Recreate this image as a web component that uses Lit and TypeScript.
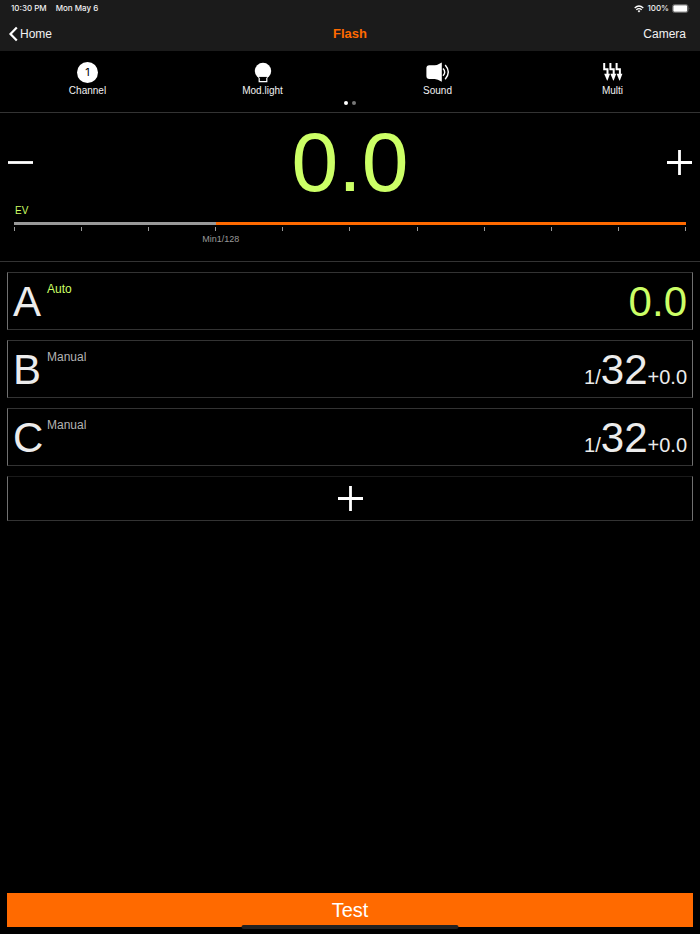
import { LitElement, html, svg, css, nothing } from "lit";
import { customElement, property, state } from "lit/decorators.js";
import { classMap } from "lit/directives/class-map.js";

interface Group {
  name: string;
  mode: "Auto" | "Manual";
  prefix?: string;
  value: string;
  suffix?: string;
}

const GROUPS: Group[] = [
  { name: "A", mode: "Auto", value: "0.0" },
  { name: "B", mode: "Manual", prefix: "1/", value: "32", suffix: "+0.0" },
  { name: "C", mode: "Manual", prefix: "1/", value: "32", suffix: "+0.0" },
];

const plusIcon = html`<svg class="sign" viewBox="0 0 25 25" width="25" height="25" aria-hidden="true">
  <path d="M0 12.5H25M12.5 0V25" stroke="#fff" stroke-width="2.8" fill="none" />
</svg>`;

const minusIcon = html`<svg class="sign" viewBox="0 0 25 25" width="25" height="25" aria-hidden="true">
  <path d="M0 12.5H25" stroke="#fff" stroke-width="2.8" fill="none" />
</svg>`;

const bolt = (x: number) => svg`<g transform="translate(${x} 0)">
  <path d="M2.2 2V8.2H5.5V14" fill="none" stroke="#fff" stroke-width="2" />
  <path d="M2.2 12.8H8L5.5 19.4H5Z" fill="#fff" />
</g>`;

const bulbIcon = html`<svg viewBox="0 0 22 22" width="22" height="22" aria-hidden="true">
  <circle cx="11" cy="10" r="8.2" fill="#fff" />
  <path d="M7.2 16V20.7H14.8V16" fill="#000" stroke="#fff" stroke-width="1.2" />
  <path d="M7 16.4H15" stroke="#000" stroke-width=".8" />
</svg>`;

const soundIcon = html`<svg viewBox="0 0 24 22" width="24" height="22" aria-hidden="true">
  <path d="M3.3 4.2H8.8Q11.5 4 15.8 1.4V20.8Q11.5 18.2 8.8 18H3.3Q.4 18 .4 15.1V7.1Q.4 4.2 3.3 4.2Z" fill="#fff" />
  <path d="M17 7.6Q20.4 11.1 17 14.8M19.2 4Q25.4 11 19.2 18.2" fill="none" stroke="#fff" stroke-width="1.4" />
</svg>`;

const multiIcon = html`<svg viewBox="0 0 22 22" width="22" height="22" aria-hidden="true">
  ${bolt(0)}${bolt(6.2)}${bolt(12.4)}
</svg>`;

@customElement("tool-button")
export class ToolButton extends LitElement {
  @property() label = "";

  static styles = css`
    :host {
      display: block;
    }
    .tool {
      display: flex;
      flex-direction: column;
      align-items: center;
      width: 100%;
      padding: 0;
      border: 0;
      background: none;
      color: #f2f2f2;
      font: 10px/16px "Liberation Sans", Arial, sans-serif;
      cursor: pointer;
    }
    .icon {
      display: flex;
      align-items: center;
      justify-content: center;
      height: 22px;
    }
  `;

  render() {
    return html`<button class="tool">
      <span class="icon"><slot></slot></span>
      <span>${this.label}</span>
    </button>`;
  }
}

@customElement("flash-group")
export class FlashGroup extends LitElement {
  @property({ attribute: false }) group!: Group;

  static styles = css`
    :host {
      display: block;
    }
    .row {
      box-sizing: border-box;
      display: flex;
      align-items: flex-start;
      width: 100%;
      height: 58px;
      padding: 5px;
      border: 1px solid #333;
      border-left-color: #707070;
      border-right-color: #707070;
      background: #000;
      color: #ececec;
      font-family: "Liberation Sans", Arial, sans-serif;
      text-align: left;
      cursor: pointer;
    }
    .name {
      width: 34px;
      font-size: 42px;
      line-height: 48px;
    }
    .mode {
      flex: 1;
      color: #b4b4b4;
      font-size: 12px;
      line-height: 22px;
    }
    .reading {
      font-size: 20px;
      line-height: 48px;
    }
    .value {
      font-size: 42px;
    }
    .auto .mode,
    .auto .value {
      color: #ccff66;
    }
  `;

  render() {
    const { name, mode, prefix, value, suffix } = this.group;
    return html`<button class=${classMap({ row: true, auto: mode === "Auto" })}>
      <span class="name">${name}</span>
      <span class="mode">${mode}</span>
      <span class="reading">${prefix ?? nothing}<span class="value">${value}</span>${suffix ?? nothing}</span>
    </button>`;
  }
}

@customElement("app-root")
export class AppRoot extends LitElement {
  @state() private groups = GROUPS;

  static styles = css`
    :host {
      display: flex;
      flex-direction: column;
      min-height: 100vh;
      background: #000;
      color: #fff;
      font-family: "Liberation Sans", Arial, sans-serif;
    }
    button {
      padding: 0;
      border: 0;
      background: none;
      color: inherit;
      font-family: inherit;
      cursor: pointer;
    }
    svg {
      display: block;
    }
    .top {
      background: #1b1b1b;
    }
    .status {
      display: flex;
      justify-content: space-between;
      padding: 0 10px 0 11px;
      color: #f2f2f2;
      font: 500 8px/17px Inter, sans-serif;
    }
    .status-side {
      display: flex;
      align-items: center;
    }
    .date {
      margin-left: 9px;
    }
    .percent {
      margin: 0 3px;
    }
    .nav {
      display: grid;
      grid-template-columns: 1fr auto 1fr;
      align-items: center;
      height: 34px;
      padding: 0 14px 0 8px;
      color: #f2f2f2;
      font-size: 12px;
    }
    .nav a {
      color: inherit;
      text-decoration: none;
    }
    .back {
      display: flex;
      align-items: center;
      gap: 1px;
      justify-self: start;
    }
    .camera {
      justify-self: end;
    }
    .title {
      margin: 0 0 0 6px;
      color: #ff6a00;
      font-size: 13px;
      line-height: 16px;
    }
    .tools {
      box-sizing: border-box;
      height: 62px;
      padding-top: 10px;
      border-bottom: 1px solid #333;
    }
    .tool-grid {
      display: grid;
      grid-template-columns: repeat(4, 1fr);
    }
    .badge {
      display: block;
      width: 21px;
      height: 21px;
      border-radius: 50%;
      background: #fff;
      color: #000;
      font: 11px/21px Inter, sans-serif;
      text-align: center;
    }
    .dots {
      display: flex;
      justify-content: center;
      gap: 4px;
      margin-top: 2px;
    }
    .dot {
      width: 4px;
      height: 4px;
      border-radius: 50%;
      background: #777;
    }
    .dot.current {
      background: #fff;
    }
    .power {
      padding-bottom: 17px;
      border-bottom: 1px solid #333;
    }
    .stepper {
      display: flex;
      align-items: center;
      justify-content: space-between;
      height: 86px;
      padding: 6px 8px 0;
    }
    .total {
      color: #ccff66;
      font-size: 84px;
      line-height: 86px;
    }
    .scale {
      padding: 0 14px;
    }
    .unit {
      display: block;
      padding: 0 1px;
      color: #ccff66;
      font-size: 10px;
      line-height: 12px;
    }
    .range {
      appearance: none;
      display: block;
      width: 100%;
      height: 3px;
      margin: 5px 0 2px;
      background: linear-gradient(to right, #999 30%, #ff6a00 30%);
      cursor: pointer;
    }
    .range::-webkit-slider-thumb {
      appearance: none;
      width: 3px;
      height: 3px;
      background: transparent;
    }
    .ticks {
      display: flex;
      justify-content: space-between;
      height: 4px;
    }
    .tick {
      width: 1px;
      background: #999;
    }
    .min {
      margin: 3px 0 0 28%;
      color: #999;
      font-size: 9px;
      line-height: 10px;
    }
    .groups {
      display: flex;
      flex: 1;
      flex-direction: column;
      gap: 10px;
      margin: 0;
      padding: 10px 7px;
      list-style: none;
    }
    .add {
      box-sizing: border-box;
      display: flex;
      align-items: center;
      justify-content: center;
      width: 100%;
      height: 45px;
      border: 1px solid #333;
      border-top-color: #1a1a1a;
      border-left-color: #707070;
      border-right-color: #707070;
    }
    .bottom {
      position: relative;
      padding: 0 7px 7px;
    }
    .test {
      display: block;
      width: 100%;
      height: 34px;
      background: #ff6a00;
      font-size: 20px;
      line-height: 34px;
    }
    .home-bar {
      position: absolute;
      bottom: 5px;
      left: 50%;
      width: 31%;
      height: 4px;
      border-radius: 2px;
      background: #222;
      transform: translateX(-50%);
    }
  `;

  render() {
    return html`
      <header class="top">
        <div class="status">
          <div class="status-side">
            <span>10:30 PM</span>
            <span class="date">Mon May 6</span>
          </div>
          <div class="status-side">
            <svg viewBox="0 0 10 8" width="10" height="8" aria-hidden="true">
              <path d="M.7 3Q5 -.9 9.3 3M2.3 4.7Q5 2.4 7.7 4.7" fill="none" stroke="#fff" stroke-width="1.3" />
              <path d="M3.6 5.9Q5 4.8 6.4 5.9L5 7.5Z" fill="#fff" />
            </svg>
            <span class="percent">100%</span>
            <svg viewBox="0 0 18 9" width="18" height="9" aria-hidden="true">
              <rect x=".5" y=".5" width="15.5" height="8" rx="2" fill="none" stroke="#777" stroke-width=".8" />
              <rect x="1.3" y="1.3" width="13.9" height="6.4" rx="1.2" fill="#fff" />
              <path d="M16.8 3.2Q18 4.5 16.8 5.8Z" fill="#777" />
            </svg>
          </div>
        </div>
        <nav class="nav">
          <a class="back" href="#home">
            <svg viewBox="0 0 11 16" width="11" height="16" aria-hidden="true">
              <path d="M8.8 1.5L2.5 8L8.8 14.5" fill="none" stroke="#fff" stroke-width="2.2" />
            </svg>
            <span>Home</span>
          </a>
          <h1 class="title">Flash</h1>
          <a class="camera" href="#camera">Camera</a>
        </nav>
      </header>

      <section class="tools" aria-label="Tools">
        <div class="tool-grid">
          <tool-button label="Channel"><span class="badge">1</span></tool-button>
          <tool-button label="Mod.light">${bulbIcon}</tool-button>
          <tool-button label="Sound">${soundIcon}</tool-button>
          <tool-button label="Multi">${multiIcon}</tool-button>
        </div>
        <div class="dots">
          <span class="dot current"></span>
          <span class="dot"></span>
        </div>
      </section>

      <section class="power" aria-label="Power">
        <div class="stepper">
          <button aria-label="Decrease">${minusIcon}</button>
          <output class="total" for="ev">0.0</output>
          <button aria-label="Increase">${plusIcon}</button>
        </div>
        <div class="scale">
          <label class="unit" for="ev">EV</label>
          <input class="range" id="ev" type="range" min="0" max="10" value="3" />
          <div class="ticks">
            ${Array.from({ length: 11 }, () => html`<span class="tick"></span>`)}
          </div>
          <div class="min">Min1/128</div>
        </div>
      </section>

      <ul class="groups">
        ${this.groups.map((group) => html`<li><flash-group .group=${group}></flash-group></li>`)}
        <li><button class="add" aria-label="Add group">${plusIcon}</button></li>
      </ul>

      <footer class="bottom">
        <button class="test">Test</button>
        <div class="home-bar"></div>
      </footer>
    `;
  }
}
